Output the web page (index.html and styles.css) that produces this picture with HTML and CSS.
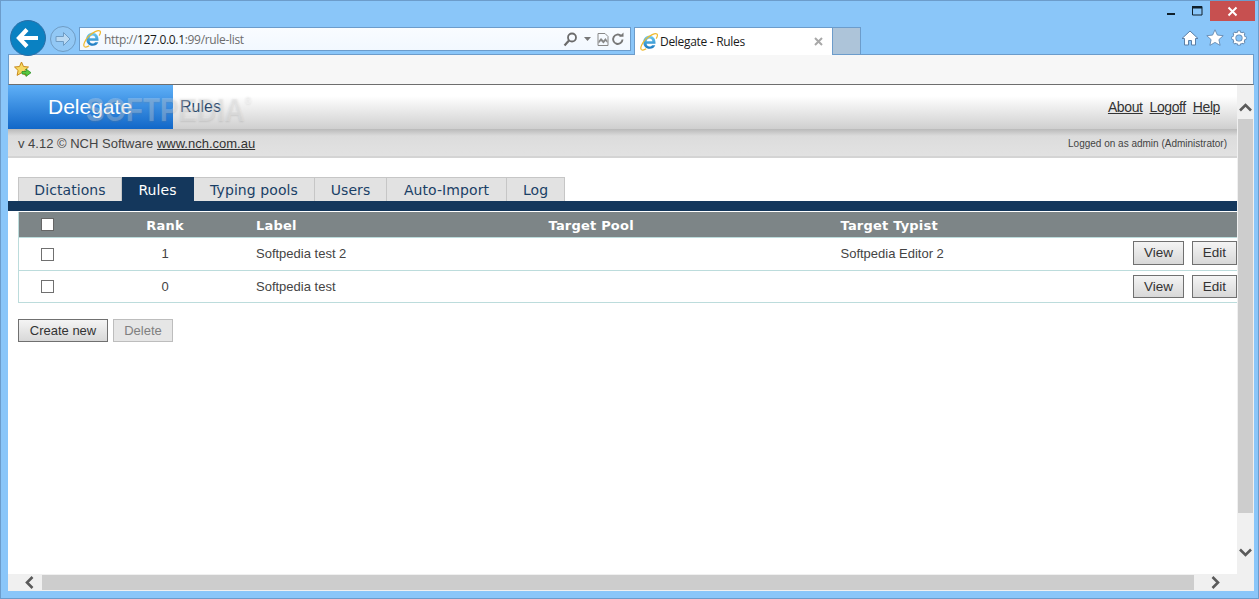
FILE: index.html
```html
<!DOCTYPE html>
<html lang="en">
<head>
<meta charset="utf-8">
<title>Delegate - Rules</title>
<link rel="stylesheet" href="styles.css">
</head>
<body>
<svg class="defs" width="0" height="0">
  <defs>
    <linearGradient id="ieblue" x1="0" y1="0" x2="0" y2="1"><stop offset="0" stop-color="#6fcdf2"/><stop offset="1" stop-color="#1a78c0"/></linearGradient>
    <symbol id="ie" viewBox="0 0 18 18">
      <path d="M9.200 2.800c3.900 0 6.300 2.800 6.300 6.600v1.300H6.600c.2 1.800 1.300 2.800 3 2.800 1.100 0 2-.5 2.500-1.300h3.200c-.9 2.300-3 3.600-5.700 3.600-3.700 0-6.300-2.600-6.300-6.500 0-4 2.700-6.500 5.900-6.500zM6.600 8.300h5.800c-.1-1.500-1.200-2.800-2.900-2.800-1.600 0-2.700 1.200-2.900 2.800z" fill="url(#ieblue)"/>
      <path d="M1.200 16.300C-.1 14.900 2 10 5.800 6.200 9.800 2.200 15.200-.2 16.900 1c1 .8.500 2.600-.7 4.600" fill="none" stroke="#efb92e" stroke-width="1.200"/>
      <path d="M1.200 16.300c1 1.100 3.300.6 5-.5" fill="none" stroke="#efb92e" stroke-width="1.200"/>
    </symbol>
  </defs>
</svg>
<div class="window">
  <div class="chrome">
    <div class="caption">
      <button class="cap cap-min" aria-label="Minimize"><svg width="10" height="10" viewBox="0 0 10 10"><rect x="1" y="7" width="8" height="2" fill="#10202c"/></svg></button>
      <button class="cap cap-max" aria-label="Maximize"><svg width="11" height="10" viewBox="0 0 11 10"><path d="M.5.500h9.500v8.500H.5z" fill="none" stroke="#10202c"/><rect x="0" y="0" width="10" height="2.500" fill="#10202c"/></svg></button>
      <button class="cap cap-close" aria-label="Close"><svg width="11" height="11" viewBox="0 0 11 11"><path d="M1.500 1.500l8 8M9.500 1.500l-8 8" stroke="#fff" stroke-width="2"/></svg></button>
    </div>
    <div class="navrow">
      <div class="back"><svg width="26" height="26" viewBox="0 0 26 26"><path d="M12 4.500L4 13l8 8.500M5 13h18" fill="none" stroke="#fff" stroke-width="4.200"/></svg></div>
      <div class="forward"><svg width="18" height="18" viewBox="0 0 18 18"><path d="M9.500 2.500L16 9l-6.500 6.500V11.500H2v-5h7.500z" fill="#b9d9f3" stroke="#6f9cc4"/></svg></div>
      <div class="address">
        <svg class="fav" width="18" height="18"><use href="#ie"/></svg>
        <span class="url">http://<b>127.0.0.1</b>:99/rule-list</span>
        <span class="addr-tools">
          <svg width="15" height="15" viewBox="0 0 15 15"><circle cx="9" cy="5.500" r="4" fill="none" stroke="#6b6b6b" stroke-width="1.800"/><path d="M6 8.500L1.500 13.500" stroke="#6b6b6b" stroke-width="2.200"/></svg>
          <svg class="caret" width="7" height="4" viewBox="0 0 7 4"><path d="M0 0h7L3.500 4z" fill="#777"/></svg>
          <svg class="compat" width="12" height="13" viewBox="0 0 12 13"><path d="M1 .500h7l3 3v9H1z" fill="none" stroke="#888"/><path d="M1.500 8l2.500-3 2.500 2.500L8.500 5l2 3v2l-2-2-2 2.500L4 8l-2.500 2.500z" fill="#888"/></svg>
          <svg width="14" height="14" viewBox="0 0 14 14"><path d="M11.500 7.500a4.700 4.700 0 1 1-1.500-3.700" fill="none" stroke="#777" stroke-width="1.900"/><path d="M8 4.800h4.500V.5z" fill="#777"/></svg>
        </span>
      </div>
      <div class="tab-ie">
        <svg class="fav" width="18" height="18"><use href="#ie"/></svg>
        <span class="tab-title">Delegate - Rules</span>
        <svg class="tab-x" width="9" height="9" viewBox="0 0 9 9"><path d="M1 1l7 7M8 1L1 8" stroke="#a8a8a8" stroke-width="2"/></svg>
      </div>
      <div class="tab-new"></div>
      <div class="tools">
        <svg width="18" height="16" viewBox="0 0 18 16"><path d="M9 1L1 8.500h2.500V15h4v-4.500h3V15h4V8.500H17z" fill="#fff" stroke="#5b7fa6"/></svg>
        <svg width="18" height="17" viewBox="0 0 18 17"><path d="M9 .8l2.400 5.300 5.800.6-4.300 3.900 1.200 5.700L9 13.400l-5.100 2.900 1.200-5.700L.8 6.700l5.800-.6z" fill="#fff" stroke="#5b7fa6" stroke-width=".8"/></svg>
        <svg width="16" height="16" viewBox="0 0 17 17"><path d="M8.500 .5v3M8.500 13.500v3M.5 8.500h3M13.500 8.500h3M2.800 2.800l2.100 2.100M12.100 12.100l2.100 2.100M14.200 2.800l-2.100 2.100M4.900 12.100l-2.100 2.100" stroke="#5b7fa6" stroke-width="3.400"/><circle cx="8.500" cy="8.500" r="5" fill="none" stroke="#5b7fa6" stroke-width="4"/><path d="M8.500 1.200v2.500M8.500 13.300v2.500M1.200 8.500h2.500M13.300 8.500h2.500M3.300 3.300l1.700 1.700M12 12l1.700 1.700M13.700 3.300L12 5M5 12l-1.700 1.700" stroke="#fff" stroke-width="2"/><circle cx="8.500" cy="8.500" r="5" fill="none" stroke="#fff" stroke-width="2.400"/></svg>
      </div>
    </div>
  </div>
  <div class="favbar">
    <svg width="18" height="18" viewBox="0 0 18 18"><path d="M7.500 1l2 4.500 5 .5-3.700 3.400 1 5L7.500 11.800l-4.400 2.600 1-5L.5 6l5-.5z" fill="#f6d860" stroke="#c98a1c"/><path d="M8 10.500h4V8l5 3.700-5 3.700V13H8z" fill="#58c840" stroke="#2c8f28" stroke-width=".8"/></svg>
  </div>
  <div class="viewport">
    <div class="page">
      <header class="app-head">
        <div class="logo">Delegate</div>
        <div class="page-name">Rules</div>
        <nav class="head-links"><a href="#">About</a><a href="#">Logoff</a><a href="#">Help</a></nav>
        <div class="watermark">SOFTPEDIA<sup>®</sup></div>
      </header>
      <div class="infobar">
        <span>v 4.12 © NCH Software <a href="#">www.nch.com.au</a></span>
        <span class="login">Logged on as admin (Administrator)</span>
      </div>
      <div class="tabs">
        <a class="tabitem" href="#">Dictations</a>
        <a class="tabitem active" href="#">Rules</a>
        <a class="tabitem" href="#">Typing pools</a>
        <a class="tabitem" href="#">Users</a>
        <a class="tabitem" href="#">Auto-Import</a>
        <a class="tabitem" href="#">Log</a>
      </div>
      <div class="band"></div>
      <div class="table-wrap">
        <table class="rules">
          <thead>
            <tr>
              <th class="c-check"><span class="box box-head"></span></th>
              <th class="c-rank">Rank</th>
              <th class="c-label">Label</th>
              <th class="c-pool">Target Pool</th>
              <th class="c-typist">Target Typist</th>
              <th class="c-actions"></th>
            </tr>
          </thead>
          <tbody>
            <tr class="row-a">
              <td class="c-check"><span class="box"></span></td>
              <td class="c-rank">1</td>
              <td class="c-label">Softpedia test 2</td>
              <td class="c-pool"></td>
              <td class="c-typist">Softpedia Editor 2</td>
              <td class="c-actions"><button class="btn btn-view">View</button><button class="btn btn-edit">Edit</button></td>
            </tr>
            <tr class="row-b">
              <td class="c-check"><span class="box"></span></td>
              <td class="c-rank">0</td>
              <td class="c-label">Softpedia test</td>
              <td class="c-pool"></td>
              <td class="c-typist"></td>
              <td class="c-actions"><button class="btn btn-view">View</button><button class="btn btn-edit">Edit</button></td>
            </tr>
          </tbody>
        </table>
      </div>
      <div class="actions">
        <button class="btn btn-create">Create new</button>
        <button class="btn btn-delete" disabled>Delete</button>
      </div>
    </div>
    <div class="vscroll">
      <svg width="13" height="9" viewBox="0 0 13 9"><path d="M1 7.500l5.500-5.500L12 7.500" fill="none" stroke="#5a5a5a" stroke-width="2.600"/></svg>
      <div class="vthumb"></div>
      <svg width="13" height="9" viewBox="0 0 13 9"><path d="M1 1.500L6.500 7 12 1.500" fill="none" stroke="#5a5a5a" stroke-width="2.600"/></svg>
    </div>
    <div class="hscroll">
      <svg width="9" height="13" viewBox="0 0 9 13"><path d="M7.500 1L2 6.500 7.500 12" fill="none" stroke="#5a5a5a" stroke-width="2.600"/></svg>
      <div class="hthumb"></div>
      <svg width="9" height="13" viewBox="0 0 9 13"><path d="M1.500 1L7 6.500 1.500 12" fill="none" stroke="#5a5a5a" stroke-width="2.600"/></svg>
    </div>
    <div class="corner"></div>
  </div>
</div>
</body>
</html>
```
FILE: styles.css
```css
* { box-sizing: border-box; }
html, body { margin: 0; padding: 0; height: 100%; overflow: hidden; }
body { font-family: "Liberation Sans", Arial, sans-serif; background: #8ac6f9; }
.defs { position: absolute; }
button { font-family: inherit; margin: 0; }
.window {
  height: 599px;
  display: flex;
  flex-direction: column;
  background: #8ac6f9;
  border: 1px solid #6c9ccb;
  padding: 0 4px 7px 7px;
}
.chrome { height: 53px; position: relative; flex: none; }
.caption { display: flex; justify-content: flex-end; height: 20px; margin-right: -1px; }
.cap { border: 0; background: none; padding: 0; display: flex; align-items: center; justify-content: center; height: 20px; }
.cap-min { width: 27px; }
.cap-max { width: 26px; }
.cap-close { width: 45px; background: #c75050; }
.navrow { display: flex; align-items: flex-start; position: relative; height: 33px; }
.back {
  position: absolute; left: 2px; top: -1px; width: 36px; height: 36px; border-radius: 50%;
  background: #0a81c2; border: 1px solid #2b6ea6; display: flex; align-items: center; justify-content: center; z-index: 2;
}
.forward {
  position: absolute; left: 42px; top: 5px; width: 26px; height: 26px; border-radius: 50%;
  border: 1px solid #6f9cc4; background: #92c8f5; display: flex; align-items: center; justify-content: center;
}
.address {
  position: absolute; left: 71px; top: 6px; width: 552px; height: 24px;
  background: linear-gradient(#f9fcff, #f2f8ff); border: 1px solid #6c9ccb;
  display: flex; align-items: center; padding-left: 3px;
}
.fav { flex: none; }
.url { font-size: 12px; color: #6d6d6d; margin-left: 3px; font-family: "Open Sans", sans-serif; letter-spacing: -.32px; }
.url b { font-weight: 400; color: #1a1a1a; }
.addr-tools { margin-left: auto; display: flex; align-items: center; padding-right: 5px; }
.caret { margin: 0 6px 0 6px; }
.compat { margin-right: 2px; }
.tab-ie {
  position: absolute; left: 626px; top: 6px; width: 199px; height: 28px;
  background: #fff; border: 1px solid #6c9ccb; border-bottom: 0;
  display: flex; align-items: center; padding: 0 5px 0 5px; z-index: 1;
}
.tab-title { font-size: 12px; color: #1a1a1a; margin-left: 2px; font-family: "Open Sans", sans-serif; letter-spacing: -.3px; }
.tab-x { margin-left: auto; margin-right: 4px; }
.tab-new {
  position: absolute; left: 825px; top: 6px; width: 28px; height: 28px;
  background: #adc4d9; border: 1px solid #6c9ccb; border-left: 0; border-bottom: 0;
}
.tools { position: absolute; right: 7px; top: 8px; display: flex; gap: 7px; align-items: center; }
.favbar {
  height: 31px; flex: none; background: #f7f7f7; border: 1px solid #6c9ccb; border-bottom: 1px solid #6e6e6e;
  padding: 0 0 0 5px; display: flex; align-items: center; position: relative;
}
.viewport {
  flex: 1; min-height: 0; display: grid; grid-template-columns: 1229px 17px; grid-template-rows: 489px 17px;
  background: #fff;
}
.page { overflow: hidden; position: relative; background: #fff; }
.app-head {
  height: 44px; display: flex; align-items: stretch; position: relative;
  background: linear-gradient(#fff 0, #fff 25%, #cfcfcf 100%);
}
.logo {
  width: 165px; background: linear-gradient(#5fb0f7, #1167c8); color: #fff; font-size: 21px;
  padding: 10px 0 0 40px; line-height: 24px;
}
.page-name { font-size: 16px; color: #2c4a6e; padding: 11px 0 0 7px; line-height: 22px; }
.head-links { margin-left: auto; display: flex; gap: 7px; padding: 13px 17px 0 0; font-size: 14px; line-height: 18px; letter-spacing: -.4px; }
.head-links a { color: #333; }
.watermark {
  position: absolute; left: 78px; top: 7px; font-size: 33px; font-weight: 700; line-height: 36px;
  color: rgba(255, 255, 255, .22); text-shadow: 0 1px 2px rgba(120, 120, 120, .22); white-space: nowrap;
  transform: scaleX(.84); transform-origin: left center;
}
.watermark sup { font-size: 11px; vertical-align: 17px; line-height: 0; font-weight: 400; }
.infobar {
  height: 29px; display: flex; justify-content: space-between; align-items: center;
  padding: 1px 10px 0; font-size: 13px; color: #444;
  background: linear-gradient(#b9b9b9 0, #dcdcdc 7px, #e2e2e2 100%);
  border-bottom: 2px solid #d4d4d4;
}
.infobar a { color: #333; }
.login { font-size: 10px; }
.tabs { display: flex; padding: 19px 0 0 10px; height: 43px; }
.tabitem {
  height: 24px; line-height: 25px; text-align: center; background: #e2e2e2; color: #1a3f66;
  font-family: "DejaVu Sans", Verdana, sans-serif; font-size: 14px; letter-spacing: .08px; text-decoration: none;
  border: 1px solid #c6c6c6; border-bottom: 0; border-left: 0; flex: none;
}
.tabitem:nth-child(1) { width: 104px; border-left: 1px solid #c6c6c6; }
.tabitem:nth-child(2) { width: 72px; }
.tabitem:nth-child(3) { width: 121px; }
.tabitem:nth-child(4) { width: 72px; }
.tabitem:nth-child(5) { width: 120px; }
.tabitem:nth-child(6) { width: 58px; }
.tabitem.active { background: #14375c; color: #fff; border-color: #14375c; }
.band { height: 10px; background: #14375c; }
.table-wrap { padding: 1px 0 0 10px; }
.rules { border-collapse: collapse; table-layout: fixed; width: 1219px; font-size: 13px; color: #444; border-left: 1px solid #bcdcdc; }
.rules th {
  background: #7d8587; color: #fff; height: 25px; padding: 3px 0 0; text-align: left;
  font-family: "DejaVu Sans", Verdana, sans-serif; font-size: 13px; font-weight: 700; letter-spacing: .2px;
  border-bottom: 1px solid #bcdcdc;
}
.rules td { padding: 0; border-bottom: 1px solid #bcdcdc; }
.rules th.c-check { padding: 1px 0 0; }
.row-a td { height: 33px; }
.row-b td { height: 32px; padding-top: 1px; }
.rules .row-a .c-actions { padding: 0 0 2px; }
.rules .row-b .c-actions { padding: 1px 0 0; }
.c-check { width: 56px; text-align: center; }
.rules .c-rank { width: 181px; text-align: center; }
.c-label { width: 293px; }
.rules td.c-label, .rules th.c-label { padding-left: .5px; }
.c-pool { width: 292px; }
.c-typist { width: 260px; }
.rules .c-actions { text-align: right; white-space: nowrap; font-size: 0; }
.box { display: block; width: 13px; height: 13px; border: 1px solid #707070; background: #fff; margin: 0 0 0 22px; }
.row-a .box { margin-top: 2px; }
.row-b .box { margin-top: -1px; }
.box-head { border-color: #666; }
.btn {
  height: 24px; padding: 0; border: 1px solid #707070; color: #333; font-size: 13.500px;
  background: linear-gradient(#f4f4f4, #d8d8d8);
}
.btn-view { width: 51px; }
.btn-edit { width: 45px; margin-left: 8px; }
.row-b .btn { height: 23px; }
.actions { display: flex; gap: 5px; padding: 16px 0 0 10px; }
.btn-create { width: 90px; height: 23px; font-size: 13px; }
.btn-delete { width: 60px; height: 23px; font-size: 13px; color: #808080; border-color: #bdbdbd; background: #e6e6e6; }
.vscroll {
  background: #f0f0f0; display: flex; flex-direction: column; align-items: center;
  height: 489px;
}
.vscroll svg { flex: none; margin: 18px 0 7px; }
.vthumb { height: 394px; flex: none; width: 15px; background: #cdcdcd; }
.vscroll svg:last-child { margin: 35px 0 0; }
.hscroll { background: #f0f0f0; display: flex; align-items: center; height: 17px; }
.hscroll svg { flex: none; margin: 0 8px 0 17px; }
.hthumb { width: 1152px; flex: none; height: 15px; background: #cdcdcd; }
.hscroll svg:last-child { margin: 0 0 0 17px; }
.corner { background: #f0f0f0; }
```
